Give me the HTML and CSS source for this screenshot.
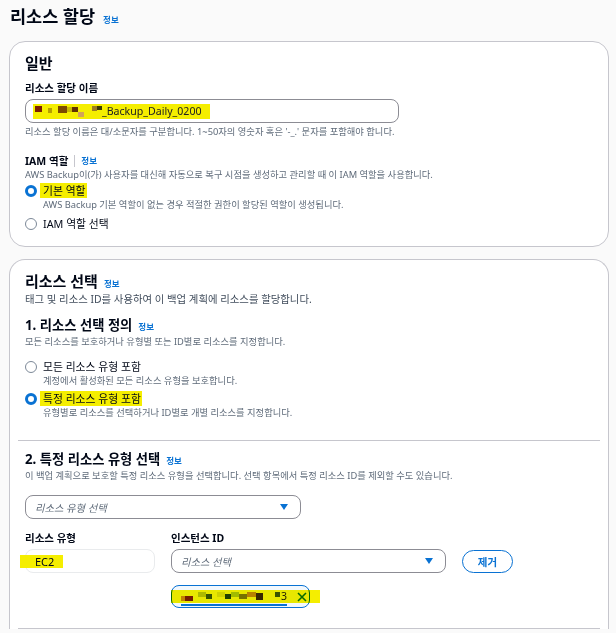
FILE: index.html
```html
<!DOCTYPE html>
<html lang="ko">
<head>
<meta charset="utf-8">
<title>리소스 할당</title>
<link rel="stylesheet" href="styles.css">
</head>
<body>
<div class="page">
  <header class="page-head">
    <h1>리소스 할당</h1>
    <a class="info">정보</a>
  </header>

  <section class="card">
    <h2>일반</h2>
    <div class="field">
      <div class="label">리소스 할당 이름</div>
      <div class="input">
        <span class="hl hl-name"><span class="mosaic"><i class="m0"></i><i class="m1"></i><i class="m2"></i><i class="m3"></i><i class="m4"></i><i class="m5"></i><i class="m6"></i><i class="m7"></i><i class="m8"></i><i class="m9"></i><i class="m10"></i><i class="m11"></i></span>_Backup_Daily_0200</span>
      </div>
      <p class="hint">리소스 할당 이름은 대/소문자를 구분합니다. 1~50자의 영숫자 혹은 '-_.' 문자를 포함해야 합니다.</p>
    </div>

    <div class="field iam">
      <div class="label">IAM 역할 <span class="sep"></span> <a class="info">정보</a></div>
      <p class="hint">AWS Backup이(가) 사용자를 대신해 자동으로 복구 시점을 생성하고 관리할 때 이 IAM 역할을 사용합니다.</p>
      <div class="radios">
        <div class="radio checked">
          <span class="dot"></span>
          <div>
            <div class="rlabel"><span class="hl">기본 역할</span></div>
            <div class="rdesc">AWS Backup 기본 역할이 없는 경우 적절한 권한이 할당된 역할이 생성됩니다.</div>
          </div>
        </div>
        <div class="radio">
          <span class="dot"></span>
          <div><div class="rlabel">IAM 역할 선택</div></div>
        </div>
      </div>
    </div>
  </section>

  <section class="card card2">
    <div class="h2row"><h2>리소스 선택</h2><a class="info">정보</a></div>
    <p class="desc">태그 및 리소스 ID를 사용하여 이 백업 계획에 리소스를 할당합니다.</p>

    <div class="h3row"><h3>1. 리소스 선택 정의</h3><a class="info">정보</a></div>
    <p class="hint">모든 리소스를 보호하거나 유형별 또는 ID별로 리소스를 지정합니다.</p>
    <div class="radios radios2">
      <div class="radio">
        <span class="dot"></span>
        <div>
          <div class="rlabel">모든 리소스 유형 포함</div>
          <div class="rdesc">계정에서 활성화된 모든 리소스 유형을 보호합니다.</div>
        </div>
      </div>
      <div class="radio checked">
        <span class="dot"></span>
        <div>
          <div class="rlabel"><span class="hl">특정 리소스 유형 포함</span></div>
          <div class="rdesc">유형별로 리소스를 선택하거나 ID별로 개별 리소스를 지정합니다.</div>
        </div>
      </div>
    </div>

    <hr class="divider">

    <div class="h3row"><h3>2. 특정 리소스 유형 선택</h3><a class="info">정보</a></div>
    <p class="hint">이 백업 계획으로 보호할 특정 리소스 유형을 선택합니다. 선택 항목에서 특정 리소스 ID를 제외할 수도 있습니다.</p>
    <div class="select select-type">
      <span class="ph">리소스 유형 선택</span>
      <span class="caret"></span>
    </div>

    <div class="res-grid">
      <div class="col col-type">
        <div class="label">리소스 유형</div>
        <div class="readonly"><span class="hl hl-ec2">EC2</span></div>
      </div>
      <div class="col col-id">
        <div class="label">인스턴스 ID</div>
        <div class="select select-id">
          <span class="ph">리소스 선택</span>
          <span class="caret"></span>
        </div>
        <div class="token">
          <span class="token-text"><span class="mosaic mosaic2"><i class="n1"></i><i class="n2"></i><i class="n3"></i><i class="n4"></i><i class="n5"></i><i class="n6"></i><i class="n7"></i><i class="n8"></i><i class="n9"></i><i class="n10"></i><i class="n11"></i><i class="n12"></i><i class="n13"></i><i class="n14"></i></span>3</span>
          <svg class="x" width="10" height="10" viewBox="0 0 10 10"><path d="M1 1 L9 9 M9 1 L1 9" stroke="#0972d3" stroke-width="1.6" fill="none"/></svg>
          <span class="hl-overlay"></span>
        </div>
      </div>
      <div class="col col-btn">
        <button class="btn">제거</button>
      </div>
    </div>

    <hr class="divider divider2">
  </section>
</div>
</body>
</html>
```

FILE: styles.css
```css
* { box-sizing: border-box; }
html, body { margin: 0; }
body {
  background: #fafafa;
  font-family: "Noto Sans", "Noto Sans CJK KR", sans-serif;
  color: #000716;
  width: 616px;
  height: 633px;
  overflow: hidden;
}
.page { padding: 2px 7px 0 9px; }
.page-head {
  display: flex;
  align-items: baseline;
  gap: 8px;
  height: 39px;
  padding-left: 1px;
}
h1 { margin: 0; font-size: 17.5px; line-height: 28px; font-weight: 700; }
.info {
  color: #0972d3;
  font-size: 8.5px;
  font-weight: 700;
  line-height: 12px;
}
.card {
  background: #fff;
  border: 1px solid #c6c6cd;
  border-radius: 16px;
  padding: 11px 15px 15px;
}
.card2 {
  margin-top: 12px;
  padding-bottom: 0;
  border-bottom: none;
  border-bottom-left-radius: 0;
  border-bottom-right-radius: 0;
}
h2 { margin: 0; font-size: 15px; line-height: 20px; font-weight: 700; }
.field { margin-top: 7px; }
.label {
  font-size: 10.5px;
  line-height: 16px;
  font-weight: 700;
  display: flex;
  align-items: center;
  gap: 6px;
}
.sep { display: inline-block; width: 1px; height: 12px; background: #c6c6cd; }
.input {
  margin-top: 3px;
  width: 374px;
  height: 24px;
  border: 1px solid #8c8c94;
  border-radius: 8px;
  padding: 0 7px;
  display: flex;
  align-items: center;
  font-size: 10.6px;
}
.hl { background: #f5ee00; }
.hl-name { display: inline-flex; align-items: center; height: 15px; padding-right: 8px; color: #202020; }
.mosaic { display: inline-flex; align-items: center; height: 15px; }
.mosaic i { display: inline-block; width: 5px; height: 5px; }
.m0 { width: 2px !important; background: transparent; }
.m1 { background: #7a1e00; width: 7px !important; height: 6px !important; margin-top: -4px; }
.m2 { background: transparent; width: 6px !important; }
.m3 { background: #b5a000; width: 4px !important; margin-top: -2px; }
.m4 { background: transparent; width: 6px !important; }
.m5 { background: #7b4a00; width: 9px !important; height: 7px !important; margin-top: -3px; }
.m6 { background: #c8b800; margin-top: -4px; }
.m7 { background: #5f3000; width: 6px !important; margin-top: -4px; }
.m8 { background: #d2a45a; width: 6px !important; margin-top: 6px; }
.m9 { background: transparent; width: 8px !important; }
.m10 { background: #9b7c20; margin-top: -5px; }
.m11 { background: #3a3a00; width: 5px !important; height: 4px !important; margin-top: -6px; }
.hint {
  margin: 2px 0 0;
  font-size: 9.3px;
  line-height: 14px;
  color: #5f6b7a;
}
.iam { margin-top: 14px; }
.iam .hint { margin-top: -1px; }
.radios { margin-top: 2px; display: flex; flex-direction: column; gap: 5px; }
.radio { display: flex; align-items: flex-start; gap: 6px; }
.dot {
  flex: none;
  width: 12px;
  height: 12px;
  margin-top: 1px;
  border-radius: 50%;
  border: 1.3px solid #7d8998;
  background: #fff;
}
.radio.checked .dot { border: 3.5px solid #0972d3; }
.rlabel { font-size: 10.8px; line-height: 14px; color: #000716; }
.rlabel .hl { padding: 0 1px 0 3px; margin-left: -3px; }
.rdesc { font-size: 9.3px; line-height: 14px; color: #5f6b7a; }

.h2row { display: flex; align-items: baseline; gap: 6px; }
.desc { margin: 1px 0 0; font-size: 10.4px; line-height: 15px; color: #414d5c; }
.h3row { display: flex; align-items: baseline; gap: 6px; margin-top: 10px; }
h3 { margin: 0; font-size: 13.3px; line-height: 17px; font-weight: 700; }
.card2 .hint { margin-top: 1px; }
.radios2 { margin-top: 11px; gap: 4px; }
.divider {
  border: none;
  border-top: 1px solid #c6c6cd;
  margin: 20px -7px 10px -7px;
}
.select {
  height: 24px;
  border: 1px solid #8c8c94;
  border-radius: 8px;
  display: flex;
  align-items: center;
  justify-content: space-between;
  padding: 0 10px 0 9px;
}
.select-type { width: 276px; margin-top: 12px; }
.ph { font-style: italic; font-size: 10.3px; color: #5f6b7a; }
.caret {
  width: 0; height: 0;
  border-left: 4.5px solid transparent;
  border-right: 4.5px solid transparent;
  border-top: 6px solid #0972d3;
  margin-right: 2px;
}
.res-grid { display: flex; gap: 16px; margin-top: 11px; }
.col-type { width: 130px; }
.col-id { width: 275px; }
.col .label { margin-bottom: 3px; }
.readonly {
  height: 24px;
  border: 1px solid #e9ebed;
  border-radius: 8px;
  display: flex;
  align-items: center;
  font-size: 11px;
}
.hl-ec2 { margin-left: -6px; padding: 0 9px 0 15px; line-height: 13px; }
.select-id { width: 275px; }
.col-btn { padding-top: 19px; }
.btn {
  width: 51px;
  height: 23px;
  border: 1.5px solid #0972d3;
  border-radius: 12px;
  background: #fff;
  color: #0972d3;
  font-family: "Noto Sans CJK KR", sans-serif;
  font-weight: 700;
  font-size: 10.5px;
  padding: 0;
}
.token {
  position: relative;
  margin-top: 12px;
  width: 139px;
  height: 23px;
  border: 1.5px solid #0972d3;
  border-radius: 8px;
  background: #f2f8fd;
  display: flex;
  align-items: flex-start;
  padding-left: 9px;
  gap: 8px;
  font-size: 10.5px;
}
.token-text {
  display: inline-flex;
  align-items: center;
  height: 18px;
  border-bottom: 2px solid #0972d3;
  margin-top: 2px;
  color: #222;
}
.mosaic2 { height: 16px; }
.mosaic2 i { width: 8px; height: 5px; }
.n1 { background: #c98a5a; width: 4px !important; margin-top: 4px; }
.n2 { background: #7a1e00; margin-top: 4px; }
.n3 { background: transparent; width: 5px !important; }
.n4 { background: #b5c63a; margin-top: -4px; }
.n5 { background: #3a5a00; width: 6px !important; }
.n6 { background: transparent; width: 5px !important; }
.n7 { background: #d8e05a; margin-top: -4px; }
.n8 { background: #244400; width: 6px !important; }
.n9 { background: #a8c83a; margin-top: -3px; }
.n10 { background: #7b7b00; }
.n11 { background: #c08a20; width: 9px !important; margin-top: -4px; }
.n12 { background: #3a2a00; width: 7px !important; height: 7px !important; }
.n13 { background: transparent; width: 12px !important; }
.n14 { background: #3c5a00; width: 5px !important; margin-top: -4px; margin-right: 1px; }
.x { flex: none; align-self: center; margin-left: 2px; }
.hl-overlay {
  position: absolute;
  left: -1.5px;
  top: 3.5px;
  width: 149px;
  height: 13px;
  background: #f5ee00;
  mix-blend-mode: multiply;
  pointer-events: none;
}
.divider2 { margin-top: 20px; }
```
